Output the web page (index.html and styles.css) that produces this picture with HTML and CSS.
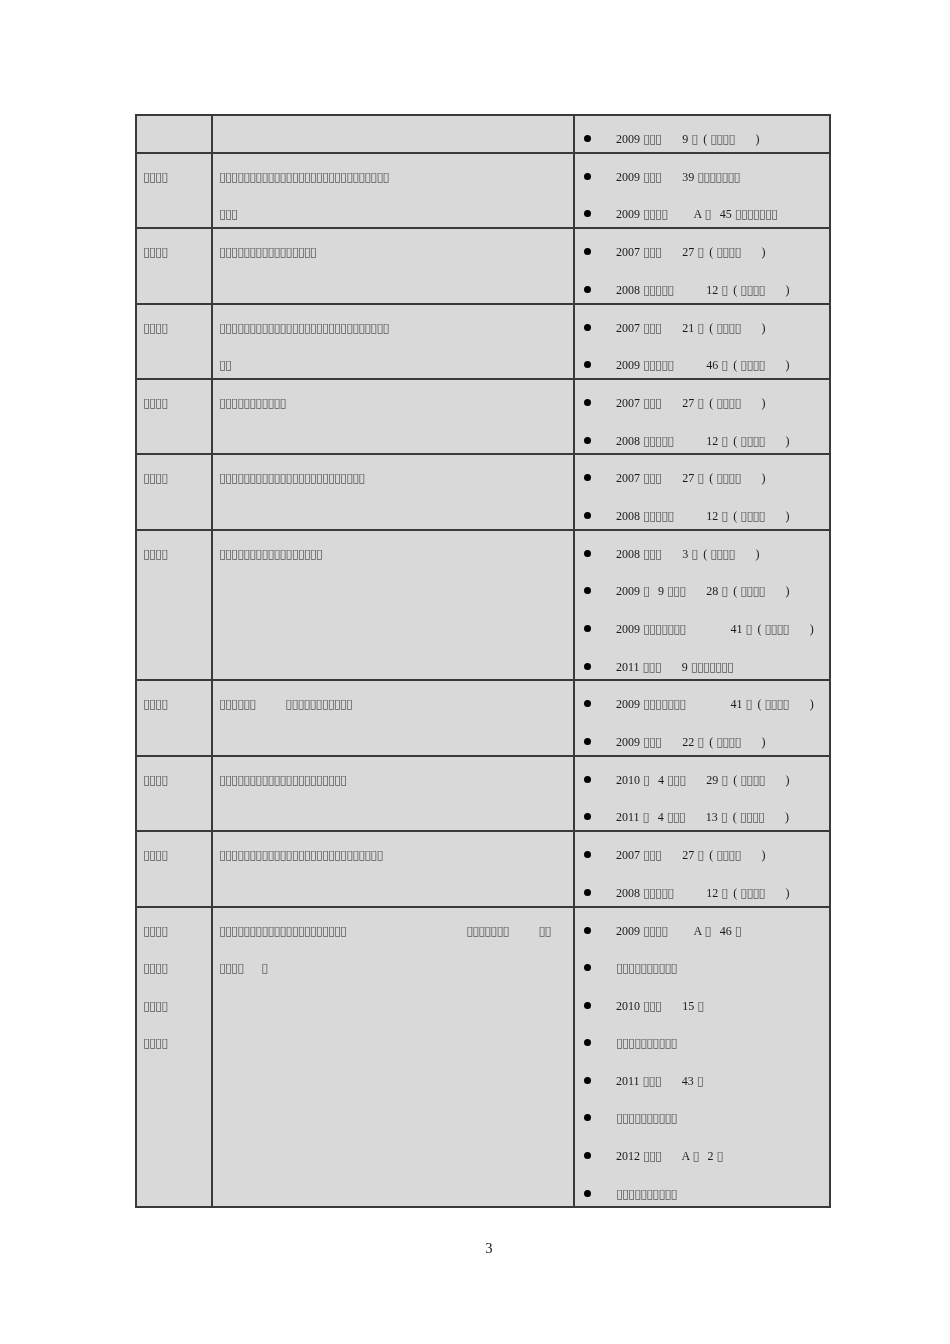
FILE: index.html
```html
<!DOCTYPE html>
<html lang="zh">
<head>
<meta charset="utf-8">
<title>Page 3</title>
<link rel="stylesheet" href="styles.css">
</head>
<body>
<div class="page">
  <table class="grid">
    <colgroup><col class="c1"><col class="c2"><col class="c3"></colgroup>
    <tr>
      <td></td>
      <td></td>
      <td>
        <div class="ln b">2009 <span class="t">▯▯▯</span>       9 <span class="t">▯</span>  ( <span class="t">▯▯▯▯</span>       )</div>
      </td>
    </tr>
    <tr>
      <td><div class="ln"><span class="t">▯▯▯▯</span></div></td>
      <td><div class="ln"><span class="t">▯▯▯▯▯▯▯▯▯▯▯▯▯▯▯▯▯▯▯▯▯▯▯▯▯▯▯▯</span></div><div class="ln"><span class="t">▯▯▯</span></div></td>
      <td>
        <div class="ln b">2009 <span class="t">▯▯▯</span>       39 <span class="t">▯▯▯▯▯▯▯</span></div>
        <div class="ln b">2009 <span class="t">▯▯▯▯</span>         A <span class="t">▯</span>   45 <span class="t">▯▯▯▯▯▯▯</span></div>
      </td>
    </tr>
    <tr>
      <td><div class="ln"><span class="t">▯▯▯▯</span></div></td>
      <td><div class="ln"><span class="t">▯▯▯▯▯▯▯▯▯▯▯▯▯▯▯▯</span></div></td>
      <td>
        <div class="ln b">2007 <span class="t">▯▯▯</span>       27 <span class="t">▯</span>  ( <span class="t">▯▯▯▯</span>       )</div>
        <div class="ln b">2008 <span class="t">▯▯▯▯▯</span>           12 <span class="t">▯</span>  ( <span class="t">▯▯▯▯</span>       )</div>
      </td>
    </tr>
    <tr>
      <td><div class="ln"><span class="t">▯▯▯▯</span></div></td>
      <td><div class="ln"><span class="t">▯▯▯▯▯▯▯▯▯▯▯▯▯▯▯▯▯▯▯▯▯▯▯▯▯▯▯▯</span></div><div class="ln"><span class="t">▯▯</span></div></td>
      <td>
        <div class="ln b">2007 <span class="t">▯▯▯</span>       21 <span class="t">▯</span>  ( <span class="t">▯▯▯▯</span>       )</div>
        <div class="ln b">2009 <span class="t">▯▯▯▯▯</span>           46 <span class="t">▯</span>  ( <span class="t">▯▯▯▯</span>       )</div>
      </td>
    </tr>
    <tr>
      <td><div class="ln"><span class="t">▯▯▯▯</span></div></td>
      <td><div class="ln"><span class="t">▯▯▯▯▯▯▯▯▯▯▯</span></div></td>
      <td>
        <div class="ln b">2007 <span class="t">▯▯▯</span>       27 <span class="t">▯</span>  ( <span class="t">▯▯▯▯</span>       )</div>
        <div class="ln b">2008 <span class="t">▯▯▯▯▯</span>           12 <span class="t">▯</span>  ( <span class="t">▯▯▯▯</span>       )</div>
      </td>
    </tr>
    <tr>
      <td><div class="ln"><span class="t">▯▯▯▯</span></div></td>
      <td><div class="ln"><span class="t">▯▯▯▯▯▯▯▯▯▯▯▯▯▯▯▯▯▯▯▯▯▯▯▯</span></div></td>
      <td>
        <div class="ln b">2007 <span class="t">▯▯▯</span>       27 <span class="t">▯</span>  ( <span class="t">▯▯▯▯</span>       )</div>
        <div class="ln b">2008 <span class="t">▯▯▯▯▯</span>           12 <span class="t">▯</span>  ( <span class="t">▯▯▯▯</span>       )</div>
      </td>
    </tr>
    <tr>
      <td><div class="ln"><span class="t">▯▯▯▯</span></div></td>
      <td><div class="ln"><span class="t">▯▯▯▯▯▯▯▯▯▯▯▯▯▯▯▯▯</span></div></td>
      <td>
        <div class="ln b">2008 <span class="t">▯▯▯</span>       3 <span class="t">▯</span>  ( <span class="t">▯▯▯▯</span>       )</div>
        <div class="ln b">2009 <span class="t">▯</span>   9 <span class="t">▯▯▯</span>       28 <span class="t">▯</span>  ( <span class="t">▯▯▯▯</span>       )</div>
        <div class="ln b">2009 <span class="t">▯▯▯▯▯▯▯</span>               41 <span class="t">▯</span>  ( <span class="t">▯▯▯▯</span>       )</div>
        <div class="ln b">2011 <span class="t">▯▯▯</span>       9 <span class="t">▯▯▯▯▯▯▯</span></div>
      </td>
    </tr>
    <tr>
      <td><div class="ln"><span class="t">▯▯▯▯</span></div></td>
      <td><div class="ln"><span class="t">▯▯▯▯▯▯</span>          <span class="t">▯▯▯▯▯▯▯▯▯▯▯</span></div></td>
      <td>
        <div class="ln b">2009 <span class="t">▯▯▯▯▯▯▯</span>               41 <span class="t">▯</span>  ( <span class="t">▯▯▯▯</span>       )</div>
        <div class="ln b">2009 <span class="t">▯▯▯</span>       22 <span class="t">▯</span>  ( <span class="t">▯▯▯▯</span>       )</div>
      </td>
    </tr>
    <tr>
      <td><div class="ln"><span class="t">▯▯▯▯</span></div></td>
      <td><div class="ln"><span class="t">▯▯▯▯▯▯▯▯▯▯▯▯▯▯▯▯▯▯▯▯▯</span></div></td>
      <td>
        <div class="ln b">2010 <span class="t">▯</span>   4 <span class="t">▯▯▯</span>       29 <span class="t">▯</span>  ( <span class="t">▯▯▯▯</span>       )</div>
        <div class="ln b">2011 <span class="t">▯</span>   4 <span class="t">▯▯▯</span>       13 <span class="t">▯</span>  ( <span class="t">▯▯▯▯</span>       )</div>
      </td>
    </tr>
    <tr>
      <td><div class="ln"><span class="t">▯▯▯▯</span></div></td>
      <td><div class="ln"><span class="t">▯▯▯▯▯▯▯▯▯▯▯▯▯▯▯▯▯▯▯▯▯▯▯▯▯▯▯</span></div></td>
      <td>
        <div class="ln b">2007 <span class="t">▯▯▯</span>       27 <span class="t">▯</span>  ( <span class="t">▯▯▯▯</span>       )</div>
        <div class="ln b">2008 <span class="t">▯▯▯▯▯</span>           12 <span class="t">▯</span>  ( <span class="t">▯▯▯▯</span>       )</div>
      </td>
    </tr>
    <tr>
      <td>
        <div class="ln"><span class="t">▯▯▯▯</span></div>
        <div class="ln"><span class="t">▯▯▯▯</span></div>
        <div class="ln"><span class="t">▯▯▯▯</span></div>
        <div class="ln"><span class="t">▯▯▯▯</span></div>
      </td>
      <td>
        <div class="ln"><span class="t">▯▯▯▯▯▯▯▯▯▯▯▯▯▯▯▯▯▯▯▯▯</span>                                        <span class="t">▯▯▯▯▯▯▯</span>          <span class="t">▯▯</span></div>
        <div class="ln"><span class="t">▯▯▯▯</span>      <span class="t">▯</span></div>
      </td>
      <td>
        <div class="ln b">2009 <span class="t">▯▯▯▯</span>         A <span class="t">▯</span>   46 <span class="t">▯</span></div>
        <div class="ln b"><span class="t">▯▯▯▯▯▯▯▯▯▯</span></div>
        <div class="ln b">2010 <span class="t">▯▯▯</span>       15 <span class="t">▯</span></div>
        <div class="ln b"><span class="t">▯▯▯▯▯▯▯▯▯▯</span></div>
        <div class="ln b">2011 <span class="t">▯▯▯</span>       43 <span class="t">▯</span></div>
        <div class="ln b"><span class="t">▯▯▯▯▯▯▯▯▯▯</span></div>
        <div class="ln b">2012 <span class="t">▯▯▯</span>       A <span class="t">▯</span>   2 <span class="t">▯</span></div>
        <div class="ln b"><span class="t">▯▯▯▯▯▯▯▯▯▯</span></div>
      </td>
    </tr>
  </table>
  <div class="folio">3</div>
</div>
</body>
</html>
```

FILE: styles.css
```css
html, body {
  margin: 0;
  padding: 0;
  background: #ffffff;
}

.page {
  width: 950px;
  height: 1344px;
  box-sizing: border-box;
  padding: 114px 0 0 135px;
  font-family: "Liberation Serif", "Times New Roman", serif;
  font-size: 12px;
  color: #1a1a1a;
  background: #ffffff;
  filter: grayscale(100%);
}

.grid {
  border-collapse: collapse;
  width: 696px;
  table-layout: fixed;
  background: #d9d9d9;
}

.c1 { width: 76px; }
.c2 { width: 362px; }
.c3 { width: 256px; }

.grid td {
  border: 2px solid #3a3a3a;
  padding: 0 0 0 6px;
  vertical-align: top;
}

.ln {
  height: 37.6px;
  box-sizing: border-box;
  padding-top: 8px;
  line-height: 29px;
  white-space: pre;
}

.ln:last-child {
  height: 35.8px;
}

.ln.b {
  padding-left: 35px;
  position: relative;
}

.ln.b::before {
  content: "";
  position: absolute;
  left: 3px;
  top: 19px;
  width: 7px;
  height: 7px;
  border-radius: 50%;
  background: #000;
}

.t {
  font-family: "DejaVu Sans", sans-serif;
  font-size: 13px;
  letter-spacing: -1.1px;
  color: #5a5a5a;
}

.folio {
  width: 696px;
  padding-top: 33px;
  padding-left: 12px;
  box-sizing: border-box;
  text-align: center;
  font-size: 14px;
  color: #111;
}
```
